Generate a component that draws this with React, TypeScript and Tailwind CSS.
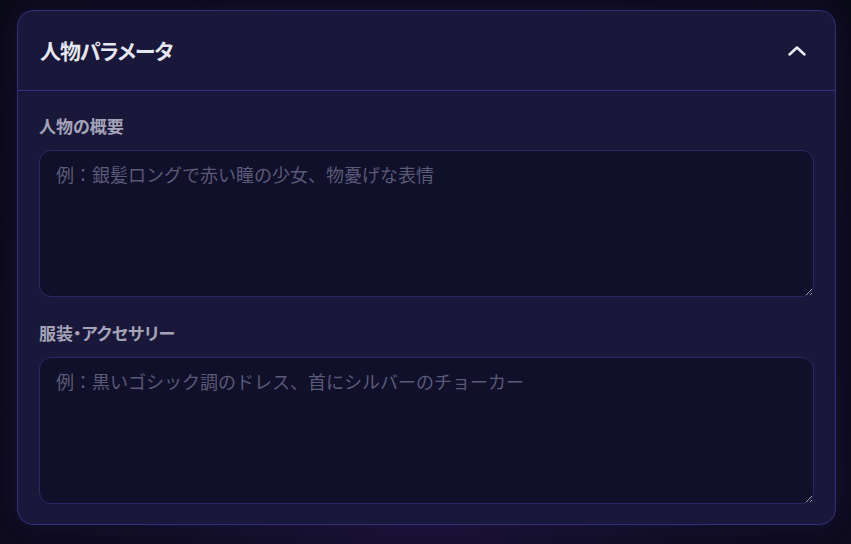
import React from "react";

const font = "font-['Noto_Sans_CJK_JP','Noto_Sans',sans-serif]";

function Field({ label, placeholder }: { label: string; placeholder: string }) {
  return (
    <div className="flex flex-col">
      <label className="h-6 leading-6 text-[17px] font-bold text-[#a4a3b8] [font-feature-settings:'palt']">
        {label}
      </label>
      <textarea
        placeholder={placeholder}
        className="mt-3 h-[147px] w-full rounded-xl border border-[#2c2866] bg-[#10102a] px-4 pt-[9px] text-[18px] leading-7 text-[#d0d0e0] placeholder:text-[#5b5a78] outline-none"
      />
    </div>
  );
}

export default function App() {
  return (
    <div
      className={`${font} min-h-[544px] w-full bg-[radial-gradient(ellipse_at_50%_110%,#1b1236_0%,#0f0d22_45%,#0b0a18_100%)] pl-[17px] pr-[15px] pt-[10px] pb-[18px]`}
    >
      <div className="rounded-2xl border border-[#342c7c] bg-[#19183a] shadow-[0_0_24px_rgba(60,40,140,0.18)]">
        <div className="flex h-[80px] items-center justify-between border-b border-[#372d84] pl-[22px] pr-[26px]">
          <h2 className="text-[21px] font-bold tracking-[-1px] text-[#e6e6f0] [font-feature-settings:'palt']">
            人物パラメータ
          </h2>
          <svg width="24" height="24" viewBox="0 0 24 24" fill="none" stroke="#ececf4" strokeWidth="2.5" strokeLinecap="round" strokeLinejoin="round">
            <path d="M4.5 15.5l7.5-7 7.5 7" />
          </svg>
        </div>
        <div className="flex flex-col gap-6 px-[21px] pt-[23px] pb-[20px]">
          <Field label="人物の概要" placeholder="例：銀髪ロングで赤い瞳の少女、物憂げな表情" />
          <Field label="服装・アクセサリー" placeholder="例：黒いゴシック調のドレス、首にシルバーのチョーカー" />
        </div>
      </div>
    </div>
  );
}
